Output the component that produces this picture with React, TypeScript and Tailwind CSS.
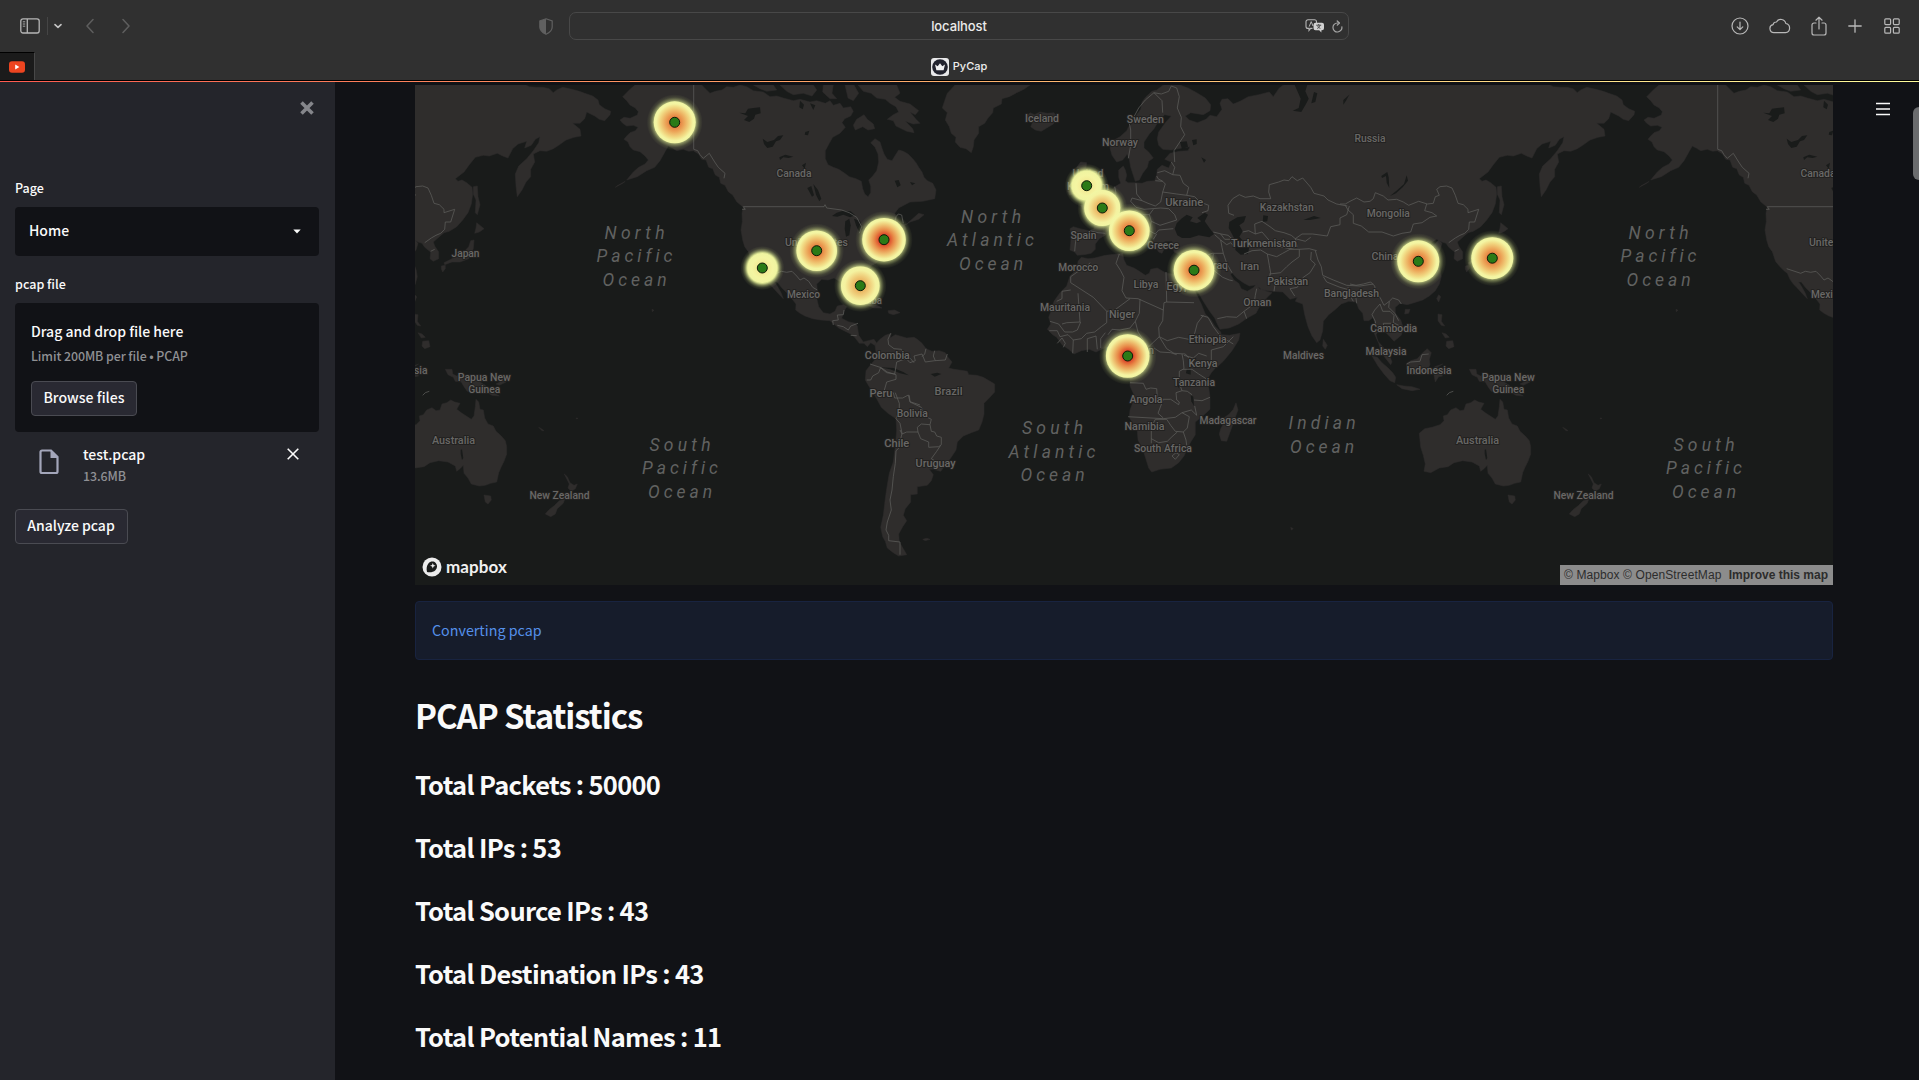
import React from "react";

/* ---------- map geometry ---------- */

// Coastlines and borders are stored per tile in thirds of a pixel; each tile has its own origin.
type Tile = "A" | "B" | "C" | "D" | "E" | "F";
const ORIGIN: Record<Tile, [number, number]> = {
  A: [400, 80],
  B: [860, 80],
  C: [1340, 80],
  D: [400, 330],
  E: [900, 330],
  F: [1380, 330],
};
type Part = [Tile, string];

function points(parts: Part[]) {
  return parts
    .flatMap(([tile, pts]) =>
      pts
        .trim()
        .split(/\s+/)
        .map((p) => {
          const [x, y] = p.split(",").map(Number);
          return `${(ORIGIN[tile][0] + x / 3).toFixed(1)},${(ORIGIN[tile][1] + y / 3).toFixed(1)}`;
        }),
    )
    .join(" ");
}

const LAND: Part[][] = [
  // North and Central America
  [
    ["A", "705,15 690,28 668,50 680,62 690,75 706,84 715,95 712,105 690,115 672,112 660,120 668,130 680,138 700,136 714,142 706,152 690,158 680,168 672,178 684,186 690,200 700,210 720,215 735,228 745,240 735,252 716,262 700,276 680,300 712,290 740,272 764,262 780,242 795,215 805,198 818,205 830,212 850,208 866,214 880,212 896,222 905,238 918,240 926,262 938,266 946,285 958,292 962,310 975,316 985,335 998,345 1010,365 1030,382 1026,400 1027,425 1023,450 1028,480 1034,500 1045,515 1050,530 1055,545 1068,560 1080,572 1090,580 1098,598 1108,612 1122,626 1134,640 1150,656 1144,640 1134,622 1124,606 1132,606 1144,622 1158,636 1172,652 1188,672 1187,690 1200,700 1215,708 1238,716 1262,720 1290,722 1302,732 1316,744 1332,752 1352,762 1364,772 1378,790 1392,790 1402,800 1412,788 1424,796 1430,790 1422,778 1404,782 1390,786 1376,766 1372,738 1366,730 1345,725 1325,715 1332,694 1340,680 1330,674 1312,678 1305,694 1290,702 1270,698 1256,680 1250,655 1252,630 1250,612 1265,598 1284,600 1302,594 1318,604 1340,600 1362,600 1375,608 1385,625 1395,642 1403,636 1400,614 1396,596 1402,572 1416,556 1430,548 1446,530 1452,505 1462,488 1475,482 1486,466 1506,456 1518,448 1514,436 1530,426 1556,418 1572,404 1556,400 1520,432 1504,434 1492,420 1484,400 1496,384 1530,366 1568,364 1604,356 1608,330 1598,310 1582,302 1572,292 1566,276 1556,262 1548,248 1538,236 1524,222 1510,214 1496,210 1486,226 1476,242 1462,238 1452,222 1446,205 1440,186 1425,176 1412,188 1425,202 1434,222 1436,246 1430,272 1418,288 1406,300 1412,318 1412,338 1404,350 1394,342 1388,326 1384,304 1368,296 1348,290 1334,280 1316,268 1300,262 1284,254 1276,236 1276,212 1288,190 1298,172 1320,160 1336,142 1326,128 1334,116 1352,108 1360,94 1352,80 1330,84 1320,70 1300,76 1290,62 1276,70 1250,62 1230,66 1200,58 1180,62 1150,54 1130,48 1110,50 1090,36 1060,32 1040,20 1020,15 1000,22 980,20 966,30 946,34 930,40 916,26 905,15"],
  ],
  // Arctic archipelago and Baffin Island
  [["A", "1060,15 1120,15 1130,30 1100,34 1080,26"]],
  [["A", "1140,15 1240,15 1250,30 1236,48 1210,40 1180,44 1160,34"]],
  [["A", "1270,15 1300,15 1296,40 1310,56 1290,56 1268,36"]],
  [["A", "1335,15 1362,15 1376,40 1360,62 1344,54"]],
  [["A", "1374,15 1490,15 1500,40 1484,52 1500,64 1530,72 1556,92 1546,104 1530,96 1548,118 1560,130 1540,132 1516,124 1538,146 1542,158 1520,154 1488,138 1480,122 1462,118 1480,104 1496,96 1488,80 1470,70 1456,58 1430,54 1414,40 1390,34"]],
  [["A", "1370,118 1392,104 1402,118 1420,132 1424,146 1404,150 1388,140 1366,150 1360,136"]],
  // Greenland
  [["B", "285,15 262,40 254,62 247,84 262,98 256,120 268,140 274,160 288,172 286,186 300,202 318,206 334,218 340,200 342,180 356,160 356,140 374,130 384,114 398,98 400,84 424,72 426,56 448,50 470,38 492,28 510,15"]],
  // Iceland
  [["B", "500,108 510,98 524,104 540,96 562,100 582,98 592,112 580,132 560,144 544,154 526,150 512,140 518,126 502,122"]],
  // Great Britain and Ireland
  [["B", "662,246 680,248 678,264 692,278 696,296 708,310 714,324 732,330 726,346 704,352 684,352 670,358 680,342 664,334 672,316 660,300 654,280 650,262"]],
  [["B", "632,308 650,300 656,318 650,338 628,346 622,332"]],
  // Europe and Asia
  [
    ["B", "1270,15 1258,24 1240,50 1228,36 1196,44 1165,50 1140,64 1120,72 1104,56 1086,58 1080,70 1086,88 1070,110 1050,106 1038,118 1012,128 988,120 976,108 992,98 1030,104 1050,92 1052,74 1036,54 1010,38 984,24 960,15 910,15 890,30 876,34 858,50 846,66 842,88 830,104 824,122 806,140 800,152 780,170 756,184 750,204 756,226 770,246 788,240 802,222 808,238 812,262 820,286 826,304 838,300 848,280 862,262 866,244 880,234 866,216 852,204 852,186 868,162 882,146 896,122 914,104 934,108 916,128 896,156 892,176 896,196 908,208 934,210 966,204 990,200 984,212 958,214 930,220 914,238 934,246 926,264 906,256 892,268 890,284 884,302 862,304 846,310 824,308 804,308 796,302 800,286 796,270 790,258 776,270 776,292 782,310 762,322 748,338 734,352 716,362 704,370 684,366 686,374 662,376 668,388 688,394 700,404 704,424 702,446 686,452 660,446 640,440 630,446 634,466 632,490 630,510 644,516 652,526 672,524 694,520 706,508 706,492 718,476 738,464 742,452 760,446 782,446 796,452 808,470 822,480 832,500 830,512 842,510 846,498 856,494 868,494 848,474 832,456 824,436 832,430 842,444 862,462 878,478 884,496 896,516 906,520 912,508 902,492 916,484 936,484 940,500 942,516 962,526 988,528 1010,522 1030,528 1028,560 1022,590 1008,598 1002,612 1014,636 1030,664 1048,692 1064,714 1072,732 1080,748 1108,744 1136,732 1162,714 1188,700 1196,684 1206,670 1222,652 1236,638 1216,632 1198,626 1190,608 1182,622 1162,634 1144,626 1136,610 1122,600 1112,584 1116,578 1130,594 1150,608 1168,618 1190,614 1206,630 1240,634 1268,636 1290,658 1312,652 1306,664 1328,672 1334,704 1344,740 1356,768 1370,788 1380,780 1388,752 1390,724 1406,704 1424,690 1444,672 1466,664 1488,666"],
    ["C", "50,670 56,686 68,700 72,722 86,722 100,712 106,736 102,758 116,790 122,812 136,834 152,854 156,846 146,820 130,802 114,784 108,764 116,752 132,752 150,770 162,784 184,766 190,744 182,720 166,700 166,682 180,670 202,674 222,668 248,660 268,648 286,632 298,612 304,590 300,568 292,548 284,530 300,510 306,490 296,480 282,496 270,490 290,478 306,486 318,490 326,502 344,516 342,536 352,544 368,536 368,516 356,498 352,486 370,470 384,458 400,454 422,440 440,420 456,398 466,372 470,342 468,322 452,308 438,300 426,304 418,296 444,276 460,254 478,232 502,226 520,228 544,220 560,228 576,234 590,206 606,192 632,184 626,204 646,196 658,178 672,170 668,188 652,212 632,236 608,258 598,282 600,318 604,350 618,330 630,306 644,290 644,268 656,246 652,222 672,212 692,214 712,206 728,196 750,180 774,172 795,168 792,148 770,130 792,130 806,116 812,96 836,108 850,118 866,122 882,104 884,94 866,86 850,74 846,60 830,48 806,40 790,34 768,28 740,22 722,30 712,38 700,26 680,22 660,22 640,20 630,15"],
  ],
  // Africa
  [
    ["B", "664,532 684,536 704,534 736,526 770,522 788,520 792,540 800,556 822,564 838,574 856,586 868,580 872,568 892,564 916,578 946,584 976,586 1002,594 994,612 1008,640 1024,672 1036,702 1052,718 1064,738 1082,756 1084,764 1108,766 1140,760 1136,780 1116,812 1090,844 1070,862"],
    ["E", "948,112 934,128 922,148 926,172 930,202 930,238 908,258 886,276 886,314 872,336 864,352 852,378 836,398 814,414 780,418 755,426 746,414 738,388 728,356 714,330 712,302 698,280 688,262 690,240 700,214 700,190 690,168 690,148 680,124 676,90 676,72 656,62 636,48 608,56 588,66 568,58 544,62 522,72 506,58 486,44 470,22"],
    ["B", "578,764 562,748 572,732 566,712 574,692 582,664 600,638 620,618 630,588 652,566 654,544"],
  ],
  // Madagascar
  [["E", "1008,218 1014,240 1006,262 996,290 980,334 964,332 958,312 962,296 970,282 968,266 988,252 1000,238"]],
  // South America
  [
    ["D", "1425,44 1440,28 1456,16 1474,10 1470,24 1486,14 1520,24 1542,22"],
    ["E", "52,28 66,40 78,56 96,64 118,62 136,68 144,82 156,96 146,114 162,118 178,120 202,124 206,134 230,136 250,142 270,154 284,162 284,186 264,208 252,220 252,252 246,276 236,300 214,308 190,318 172,336 168,360 152,384 138,402 122,424 100,418 88,418 100,434 94,452 82,466 52,470 52,492 32,494 32,516 16,536 10,556 20,572 8,590 -4,612 -2,636 10,656 20,674 -4,678"],
    ["D", "1480,668 1462,654 1456,634 1448,620 1442,592 1450,556 1454,520 1460,476 1468,430 1480,396 1486,350 1490,300 1488,266 1464,250 1444,232 1430,206 1418,186 1404,164 1396,150 1398,122 1412,104 1424,90 1428,66"],
  ],
  // Australia, Tasmania, New Zealand
  [["F", "118,310 134,296 156,292 180,284 192,272 190,258 202,254 212,240 228,233 240,242 252,240 258,222 272,218 284,210 296,216 312,220 302,238 318,250 346,268 354,258 358,230 360,208 368,216 372,238 382,240 386,264 396,282 412,288 420,304 436,318 448,332 452,350 452,372 444,394 436,410 428,428 422,456 404,460 388,466 370,468 346,462 336,444 324,430 322,406 312,416 302,424 298,408 276,396 248,392 222,398 204,410 178,414 152,428 132,424 136,402 130,376 122,352"]],
  [["F", "384,495 404,498 406,510 396,522 388,516"]],
  [["F", "625,432 634,440 642,458 654,466 664,462 658,476 646,484 636,474 640,462"]],
  [["F", "626,508 622,520 604,536 598,552 584,560 568,552 578,540 596,526 610,512"]],
  // New Guinea and Indonesian islands
  [["F", "268,118 288,118 290,132 302,138 318,130 342,144 366,152 388,166 396,180 412,188 430,198 408,196 390,186 372,178 356,186 334,184 324,170 316,156 298,154 292,142 276,134"]],
  [["F", "420,162 448,148 450,156 430,166"]],
  [["F", "-24,78 -8,82 6,98 22,112 38,128 47,142 44,158 30,152 12,132 -6,108"]],
  [["F", "50,164 72,168 96,170 120,178 96,182 66,176"]],
  [["F", "80,100 92,92 112,86 128,68 142,56 154,68 148,88 150,104 136,130 116,134 92,132 80,116"]],
  [["F", "164,110 188,102 172,112 176,126 188,138 176,140 166,156 162,136"]],
  // Philippines, Taiwan, Hainan, Sri Lanka
  [["C", "294,702 306,704 304,724 314,738 304,736 294,722"]],
  [["C", "320,784 338,782 342,800 326,806 318,798"]],
  [["C", "306,758 318,762 328,772 316,774"]],
  [["C", "296,644 302,650 296,666 290,656"]],
  [["C", "196,688 210,688 206,700 194,702"]],
  [["B", "1390,778 1402,796 1396,808 1388,798"]],
  // Sakhalin and Japan
  [["C", "472,320 484,318 486,350 492,374 484,404 478,398 480,360 472,342"]],
  [["C", "482,428 504,446 490,456 476,460 480,444"]],
  [["C", "464,482 474,480 472,506 458,536 432,546 408,546 386,554 384,548 412,534 438,522 458,500"]],
  [["C", "376,558 388,556 388,566 380,576 376,566"]],
  // Caribbean
  [["A", "1360,660 1390,660 1420,670 1446,684 1420,684 1392,670"]],
  [["A", "1464,692 1484,690 1500,698 1480,704 1466,700"]],
  // Islands and atolls
  [["A", "756,688 762,691 757,695"]],
  [["D", "416,292 424,296 432,302 426,302"]],
  [["D", "528,264 534,265 530,267"]],
  [["E", "68,628 80,625 90,628 76,632"]],
  [["E", "1172,592 1180,596 1174,600"]],
  [["A", "646,322 654,316 676,304 668,310"]],
];

const WATER: Part[][] = [
  // Black Sea, Azov, Caspian, Aral
  [["B", "952,466 944,446 950,430 964,416 980,404 998,412 990,424 1010,430 1024,424 1012,414 1034,398 1044,404 1034,424 1050,446 1062,462 1048,472 1016,466 990,474 966,474"]],
  [["B", "1108,426 1132,412 1158,408 1152,426 1138,436 1148,454 1138,470 1152,486 1168,500 1164,522 1142,524 1126,510 1128,486 1116,462 1106,444"]],
  [["B", "1210,406 1224,408 1222,424 1208,426"]],
  [["B", "1330,420 1362,408 1382,414 1350,420"]],
  // Russian lakes and gulfs
  [["B", "960,186 980,184 984,200 966,208"]],
  [["B", "996,180 1010,178 1010,192 1000,196"]],
  [["B", "1024,232 1038,240 1032,248"]],
  [["B", "1304,15 1342,15 1336,34 1346,56 1338,72 1324,96 1298,92 1316,84 1322,56"]],
  [["B", "1362,36 1372,40 1366,66 1354,70"]],
  [["B", "1450,60 1468,44 1458,62 1450,74"]],
  [["C", "200,286 204,302 188,322 168,340 150,348 172,330 192,312"]],
  [["C", "124,288 142,276 146,292 148,324 140,308 138,288 126,294"]],
  // Canadian lakes and Arctic channels
  [["A", "1018,98 1036,100 1044,86 1060,84 1080,82 1082,100 1066,104 1062,116 1048,126 1032,120 1044,108"]],
  [["A", "1088,176 1102,186 1122,180 1134,168 1150,166 1140,180 1128,184 1118,200 1102,204 1092,192"]],
  [["A", "1138,232 1156,224 1180,230 1166,234 1150,232 1140,240"]],
  [["A", "1216,156 1228,152 1224,166 1214,164"]],
  [["A", "1222,324 1234,318 1242,346 1236,350"]],
  [["A", "1240,312 1254,330 1264,356 1258,364 1248,344"]],
  [["A", "1206,256 1218,248 1214,266"]],
  [["A", "1200,62 1212,74 1208,88 1198,82"]],
  [["A", "1230,70 1246,76 1240,90"]],
  [["A", "1484,302 1496,300 1502,316 1492,322"]],
  [["A", "1530,306 1546,310 1536,316"]],
  // Great Lakes
  [["A", "1296,408 1310,398 1330,392 1352,394 1366,406 1350,412 1330,404 1312,410"]],
  [["A", "1336,424 1348,416 1352,436 1348,466 1338,470 1334,446"]],
  [["A", "1362,416 1380,422 1388,446 1378,456 1368,436"]],
  [["A", "1382,474 1404,462 1420,456 1400,470"]],
  // African, Amazonian and Australian waters
  [["E", "860,116 872,116 872,134 858,130"]],
  [["E", "828,146 834,150 838,176 830,164"]],
  [["E", "872,196 880,200 882,228 874,214"]],
  [["E", "-60,112 -20,114 10,126 26,136 0,130 -30,118"]],
  [["E", "92,132 112,128 124,132 104,140"]],
  [["F", "314,360 318,358 322,384 318,390 314,372"]],
];

const BORDERS: Part[][] = [
  [["A", "881,15 881,208 893,212 900,224 910,235 928,220 944,246 955,262 975,280 972,295"]],
  [["A", "1026,388 1036,388 1030,380 1272,380 1275,374 1280,384 1325,390 1348,398 1370,412 1385,440 1378,460"]],
  [["A", "1484,430 1488,410 1495,402 1505,405 1510,430"]],
  [["A", "1088,566 1130,580 1144,574 1160,577 1176,574 1190,588 1200,600 1212,594 1226,604 1238,622 1252,630"]],
  [["A", "1300,735 1298,722 1315,720 1312,705 1330,704 1332,690"]],
  [["A", "1312,736 1330,740 1345,750 1352,738 1374,730"]],
  [["A", "1352,766 1370,767"]],
  [["D", "1472,10 1464,28 1466,44 1482,56 1504,58 1510,70 1506,90 1530,84 1542,98"]],
  [["D", "1410,102 1440,112 1460,128 1484,132 1490,96 1506,90"]],
  [["D", "1400,150 1412,150 1418,138 1436,128 1442,112 1462,126 1488,134 1488,148 1460,156 1452,184 1480,188 1484,204 1508,204 1525,195 1530,215 1560,225"]],
  [["E", "28,196 30,216 64,232 74,258 94,268 90,284 64,282 52,292 54,306 20,306 6,312 0,300"]],
  [["E", "54,306 62,326 86,336 86,352 116,350 124,344 124,322 110,318 104,306 94,304 90,284"]],
  [["E", "122,346 110,364 94,386 128,406"]],
  [["E", "10,76 30,98 46,92 42,78 66,72 76,96 104,92 136,90 142,72"]],
  [["E", "78,56 74,72 66,80"]],
  [["E", "104,62 100,78 106,92"]],
  [["D", "1486,188 1498,220 1498,240 1488,266 1500,280 1506,310 1496,355 1488,362 1486,400 1480,440 1476,480 1470,510 1474,540 1462,576 1458,600 1466,616 1466,632 1500,636 1500,674"]],
  [["B", "778,522 768,550 782,572 792,592 786,632 798,654 834,656"]],
  [["B", "632,590 632,608 700,652 740,694 764,690 810,656"]],
  [["B", "654,640 660,726 620,728 606,732"]],
  [["B", "590,664 606,656 606,634 632,630"]],
  [["B", "632,590 652,576 674,568 690,548"]],
  [["B", "918,576 920,666 1002,668"]],
  [["B", "834,656 910,690 912,668 920,666"]],
  [["B", "910,690 908,722 896,742 898,770 922,782 956,772 986,778 1004,760 1012,730 1030,706"]],
  [["B", "840,658 838,700 826,724 810,744 780,750 756,748 744,764"]],
  [["B", "570,724 596,732 614,756 638,756 652,750 662,726"]],
  [["B", "568,752 592,752 600,770 624,764 640,780 638,820"]],
  [["B", "592,790 606,774 616,790 610,802"]],
  [["B", "640,780 664,776 680,760 704,756 724,740 740,728 740,694"]],
  [["B", "682,816 682,776 708,768 712,808"]],
  [["B", "722,804 722,776 736,758"]],
  [["B", "826,724 834,756 850,780 866,800 898,770"]],
  [["B", "898,770 920,806 942,820 976,822 1000,850"]],
  [["B", "1022,706 1044,712 1060,740 1076,762 1100,780 1120,792"]],
  [["E", "744,66 758,70 762,54 780,66 812,68 830,74"]],
  [["E", "846,72 850,92 852,116 838,124 838,160 846,182"]],
  [["E", "690,158 730,160 738,178 752,174 770,176 772,206 790,208 774,250 790,264"]],
  [["E", "790,208 812,208 836,224 838,216 830,210 828,188 846,182 862,184 876,194"]],
  [["E", "684,260 790,266 826,262 846,248 874,240 890,256 884,228"]],
  [["E", "754,340 754,292 766,268 800,268 812,286 826,304 850,306 862,294 868,260 846,248"]],
  [["E", "754,326 776,338 802,334 816,320 832,306"]],
  [["E", "850,306 858,330 860,346"]],
  [["E", "882,210 906,212 930,202"]],
  [["E", "850,118 876,118 896,132 918,146"]],
  [["E", "852,76 880,84 896,70 920,78"]],
  [["E", "934,90 934,60 970,50 1000,20"]],
  [["E", "816,378 828,368 838,374 826,388 816,378"]],
  [["B", "805,235 812,196 812,150 808,130 822,110 836,84 856,60 882,38 906,62 908,98"]],
  [["B", "882,38 904,42 926,34 934,18 950,24 958,50 952,84 964,112 962,140 974,164 942,212 944,246"]],
  [["B", "892,278 914,272 938,284 944,262 934,246"]],
  [["B", "938,284 960,286 970,310 986,322 980,346 1004,350 1020,366 1046,376 1044,392 1026,398"]],
  [["B", "886,302 908,304 916,312 908,336 950,342 980,346"]],
  [["B", "908,304 894,296 890,288"]],
  [["B", "908,336 902,366 886,378 864,370 846,362 816,354 812,364 828,382 852,388 876,386 902,384 926,386 944,404 950,420"]],
  [["B", "828,310 830,342 846,362"]],
  [["B", "790,392 812,396 830,392 846,404 868,404 880,388"]],
  [["B", "868,404 874,424 900,436 950,420"]],
  [["B", "852,430 846,412 830,408"]],
  [["B", "874,424 868,452 886,462 896,450 940,446"]],
  [["B", "880,478 890,462"]],
  [["B", "690,452 714,458 736,460"]],
  [["B", "638,464 650,466 646,492 644,514"]],
  [["B", "764,320 768,340 758,352 774,362 772,384"]],
  [["B", "1060,456 1084,462 1104,466 1118,478 1094,478 1082,462"]],
  [["B", "1064,464 1082,480 1100,494 1112,488 1124,502"]],
  [["B", "1082,480 1086,502 1090,520 1056,520 1030,530"]],
  [["B", "1090,520 1100,550 1116,578"]],
  [["B", "1060,522 1056,552 1032,566 1034,588 1060,570 1088,592 1108,600 1118,602"]],
  [["B", "1072,716 1100,710 1130,712 1152,694 1160,716"]],
  [["B", "1152,694 1182,672 1186,646 1190,626"]],
  [["B", "1122,406 1106,400 1104,376 1118,356 1138,344 1156,352 1180,348 1200,356 1232,356 1226,336 1228,314 1256,306 1272,300 1286,302 1296,290 1312,302 1328,294 1352,322 1362,340 1392,348 1404,360 1430,372 1462,378"]],
  [["B", "1186,462 1184,432 1206,424 1230,440 1246,452 1272,458 1294,466 1306,476 1326,462 1358,462 1402,468 1412,440 1440,434 1440,414 1460,404 1468,378"]],
  [["B", "1148,456 1166,452 1186,462 1206,456 1230,484 1260,500 1290,506 1312,500 1306,476"]],
  [["B", "1306,476 1336,484 1352,472"]],
  [["B", "1152,522 1176,512 1202,510 1222,522 1228,556 1232,580 1226,596 1246,608 1242,634"]],
  [["B", "1222,522 1250,530 1268,520 1290,508 1318,508 1348,506 1370,512"]],
  [["B", "1228,582 1262,578 1280,560 1296,546 1318,530 1318,508"]],
  [["B", "1354,516 1352,540 1366,552 1350,578 1330,592 1312,622 1290,626 1304,648"]],
  [["B", "1366,512 1374,540 1384,560 1388,586 1420,600 1460,616 1500,618 1540,612"]],
  [["B", "1390,590 1400,606 1440,622 1462,628"]],
  [["B", "1464,622 1472,650 1480,664"]],
  [["C", "0,372 16,372 30,364 50,354 72,366 90,364 100,356 106,338 130,348 144,360 170,358 190,366 206,376 236,364 262,372 280,370 286,350 298,346 290,328 300,320 320,318 336,324 346,346 354,370 370,374 384,388 384,398 416,388 404,426 388,426 386,448 374,460 360,466 346,474 326,488"]],
  [["C", "16,376 24,390 40,404 40,430 64,438 86,456 126,456 160,468 186,460 212,456 220,432 246,428 270,412 290,408 276,398 254,392 260,372"]],
  [["C", "30,612 48,616 70,612 92,606 104,618 108,642 120,652 132,676 148,664 158,654 176,660 184,672"]],
  [["C", "50,670 46,640 30,634"]],
  [["C", "120,672 104,690 96,704 106,724 108,740"]],
  [["C", "120,672 128,694 150,694 162,706 160,728 176,736 182,744"]],
  [["C", "148,664 146,682 164,700 176,722"]],
  [["C", "134,752 130,730 154,730"]],
  [["C", "200,852 212,846 240,844 246,824 266,822"]],
  [["C", "344,514 356,508"]],
  [["D", "68,196 76,188 88,184"]],
];

// Name, centre x, baseline y, length.
type Label = [string, number, number, number];
const COUNTRIES: Label[] = [
  ["Japan", 465.5, 257, 28],
  ["Canada", 794, 177, 35],
  ["United States", 816.5, 246, 63],
  ["Mexico", 803.5, 298, 33],
  ["Cuba", 871, 304.5, 22],
  ["Colombia", 887.3, 359.5, 45],
  ["Peru", 881, 397, 23],
  ["Bolivia", 912.3, 417, 31],
  ["Chile", 896.8, 447.5, 25],
  ["Brazil", 948.5, 395.5, 28],
  ["Uruguay", 935.6, 467, 40],
  ["Iceland", 1042, 122.5, 34],
  ["Sweden", 1145.3, 123, 37],
  ["Norway", 1120, 146.5, 36],
  ["United", 1088, 177.5, 31],
  ["Kingdom", 1088, 190.5, 42],
  ["Ukraine", 1184.3, 206.5, 38],
  ["Spain", 1083.5, 239, 26],
  ["Greece", 1163, 249, 32],
  ["Turkmenistan", 1264, 247, 66],
  ["Kazakhstan", 1286.7, 211.5, 54],
  ["Russia", 1370, 142, 31],
  ["Mongolia", 1388.3, 217, 43],
  ["China", 1385, 260, 27],
  ["Morocco", 1078.3, 271, 40],
  ["Libya", 1146, 288.5, 25],
  ["Egypt", 1180, 290, 27],
  ["Iraq", 1219, 269, 18],
  ["Iran", 1249.7, 270, 19],
  ["Pakistan", 1287.7, 285, 41],
  ["Bangladesh", 1351.5, 297, 55],
  ["Oman", 1257.3, 306, 28],
  ["Mauritania", 1065, 311, 50],
  ["Niger", 1122, 318, 26],
  ["Cameroon", 1130, 354, 48],
  ["Ethiopia", 1207.7, 343.5, 38],
  ["Kenya", 1203, 367, 29],
  ["Maldives", 1303.5, 359, 41],
  ["Cambodia", 1393.7, 332.5, 47],
  ["Malaysia", 1386, 355.5, 41],
  ["Indonesia", 1429, 374.5, 45],
  ["Tanzania", 1194, 386, 42],
  ["Angola", 1146, 403, 33],
  ["Namibia", 1144.5, 430, 40],
  ["South Africa", 1163, 452.5, 58],
  ["Madagascar", 1228, 424.5, 57],
  ["Papua New", 1508.3, 381, 53],
  ["Guinea", 1508.3, 393, 32],
  ["Papua New", 484.3, 381, 53],
  ["Guinea", 484.3, 393, 32],
  ["Australia", 1477.5, 444, 43],
  ["Australia", 453.5, 444, 43],
  ["New Zealand", 1583.5, 499.5, 60],
  ["New Zealand", 559.5, 499.5, 60],
  ["Indonesia", 405, 374.5, 45],
  ["Canada", 1818, 177, 35],
  ["United States", 1840.5, 246, 63],
  ["Mexico", 1827.5, 298, 33],
];

const OCEANS: Label[] = [
  ["North", 635, 239, 60],
  ["Pacific", 635, 262.5, 76],
  ["Ocean", 635, 286, 64],
  ["North", 991.500, 223, 60],
  ["Atlantic", 991, 246.5, 87],
  ["Ocean", 991.500, 270, 64],
  ["North", 1659, 239, 60],
  ["Pacific", 1659, 262.5, 76],
  ["Ocean", 1659, 286, 64],
  ["South", 680.5, 451, 61],
  ["Pacific", 680.5, 474.5, 76],
  ["Ocean", 680.5, 498, 64],
  ["South", 1053, 434.5, 61],
  ["Atlantic", 1052.500, 458, 87],
  ["Ocean", 1053, 481.5, 64],
  ["Indian", 1322.500, 429.5, 67],
  ["Ocean", 1322.500, 453, 64],
  ["South", 1704.5, 451, 61],
  ["Pacific", 1704.5, 474.5, 76],
  ["Ocean", 1704.5, 498, 64],
];

// x, y, disc radius, intensity
const HOTSPOTS: [number, number, number, "hot" | "warm" | "mild" | "weak"][] = [
  [762.3, 268, 15, "weak"],
  [1086.7, 185.7, 15, "weak"],
  [1102.3, 208, 18, "mild"],
  [860.3, 285.7, 19.3, "mild"],
  [674.7, 122.3, 21, "warm"],
  [816.7, 250.7, 20.3, "warm"],
  [1129.3, 230.7, 20.3, "warm"],
  [1194, 270.2, 20.3, "warm"],
  [1418.3, 261.3, 21, "warm"],
  [1492.3, 258.2, 21, "warm"],
  [884, 239.7, 21.8, "hot"],
  [1127.7, 356, 21.8, "hot"],
];

function WorldMap() {
  return (
    <svg className="block h-[500px] w-[1418px]" viewBox="415 85 1418 500">
      <defs>
        <radialGradient id="hot">
          <stop offset="0.2" stopColor="#d93a24" />
          <stop offset="0.45" stopColor="#e88a48" />
          <stop offset="0.72" stopColor="#efcf7c" />
          <stop offset="0.88" stopColor="#f4f4a2" />
          <stop offset="1" stopColor="#f2f6a4" />
        </radialGradient>
        <radialGradient id="warm">
          <stop offset="0.2" stopColor="#e4793c" />
          <stop offset="0.45" stopColor="#eca659" />
          <stop offset="0.72" stopColor="#f1d983" />
          <stop offset="0.88" stopColor="#f4f5a3" />
          <stop offset="1" stopColor="#f2f6a4" />
        </radialGradient>
        <radialGradient id="mild">
          <stop offset="0.2" stopColor="#e9ac58" />
          <stop offset="0.5" stopColor="#efcd7a" />
          <stop offset="0.8" stopColor="#f4f2a0" />
          <stop offset="1" stopColor="#f2f6a4" />
        </radialGradient>
        <radialGradient id="weak">
          <stop offset="0.2" stopColor="#f2e690" />
          <stop offset="0.7" stopColor="#f4f5a2" />
          <stop offset="1" stopColor="#eff4a0" />
        </radialGradient>
        <radialGradient id="glow">
          <stop offset="0.7" stopColor="#e6ef98" stopOpacity="0.9" />
          <stop offset="0.8" stopColor="#c9d684" stopOpacity="0.48" />
          <stop offset="0.9" stopColor="#a8b56c" stopOpacity="0.16" />
          <stop offset="1" stopColor="#a8b56c" stopOpacity="0" />
        </radialGradient>
        <g id="world">
          <g fill="#2f2d2c" stroke="#2f2d2c" strokeWidth="0.5">
            {LAND.map((p, i) => (
              <polygon key={i} points={points(p)} />
            ))}
          </g>
          <g fill="#191b1a">
            {WATER.map((p, i) => (
              <polygon key={i} points={points(p)} />
            ))}
          </g>
          <g fill="none" stroke="#5e5d5b" strokeWidth="0.75" strokeLinejoin="round">
            {BORDERS.map((p, i) => (
              <polyline key={i} points={points(p)} />
            ))}
          </g>
        </g>
      </defs>
      <rect x="415" y="85" width="1418" height="500" fill="#191b1a" />
      <use href="#world" />
      <use href="#world" x="-1024" />
      <use href="#world" x="1024" />
      <g
        className="font-['Roboto',sans-serif]"
        fontSize="11"
        fontWeight="500"
        fill="#696866"
        stroke="#222120"
        strokeWidth="2"
        strokeLinejoin="round"
        paintOrder="stroke"
        textAnchor="middle"
      >
        {COUNTRIES.map(([t, x, y, w], i) => (
          <text key={i} x={x} y={y - 0.5} textLength={w} lengthAdjust="spacingAndGlyphs">
            {t}
          </text>
        ))}
      </g>
      <g
        className="font-['Roboto',sans-serif] [font-variant-ligatures:none]"
        fontSize="17.5"
        fontStyle="italic"
        fontWeight="400"
        fill="#616261"
      >
        {OCEANS.map(([t, x, y, w], i) => (
          <text key={i} x={x - w / 2 - 0.5} y={y - 0.5} textLength={w}>
            {t}
          </text>
        ))}
      </g>
      {HOTSPOTS.map(([x, y, r], i) => (
        <circle key={i} cx={x} cy={y} r={r + 7} fill="url(#glow)" />
      ))}
      {HOTSPOTS.map(([x, y, r, k], i) => (
        <circle key={i} cx={x} cy={y} r={r} fill={`url(#${k})`} />
      ))}
      {HOTSPOTS.map(([x, y], i) => (
        <circle key={i} cx={x} cy={y} r="5" fill="#2b7a17" stroke="#0d1a08" strokeWidth="1" />
      ))}
    </svg>
  );
}

/* ---------- browser chrome ---------- */

function Toolbar() {
  return (
    <div className="flex h-[52px] items-center">
      <div className="flex w-[569px] items-center pl-5">
        <svg className="h-4 w-5" viewBox="0 0 20 16" fill="none" stroke="#b5b5b5" strokeWidth="1.3">
          <rect x="0.8" y="0.8" width="18.4" height="14.2" rx="2.2" />
          <path d="M7.3 1v14" />
          <path d="M2.8 3.8h2.4M2.8 6h2.4M2.8 8.2h2.4" strokeWidth="0.9" />
        </svg>
        <div className="ml-[7px] h-[18px] w-px bg-[#454545]" />
        <svg className="ml-[6px] h-2 w-2" viewBox="0 0 8 8" fill="none" stroke="#c4c4c4" strokeWidth="1.6" strokeLinecap="round" strokeLinejoin="round">
          <path d="M1 2.6 4 5.4 7 2.6" />
        </svg>
        <svg className="ml-6 h-4 w-2" viewBox="0 0 8 16" fill="none" stroke="#5e5e5e" strokeWidth="1.5" strokeLinecap="round" strokeLinejoin="round">
          <path d="M7 1.5 1 8l6 6.5" />
        </svg>
        <svg className="ml-7 h-4 w-2" viewBox="0 0 8 16" fill="none" stroke="#5e5e5e" strokeWidth="1.5" strokeLinecap="round" strokeLinejoin="round">
          <path d="M1 1.5 7 8l-6 6.5" />
        </svg>
        <svg className="mr-[16px] ml-auto h-[17px] w-[14px]" viewBox="0 0 14 17">
          <path d="M7 .8 13.2 3v6c0 3.300-2.700 5.700-6.200 7.300C3.500 14.700.8 12.300.8 9V3z" fill="none" stroke="#606060" strokeWidth="1.2" />
          <path d="M7 .8.8 3v6c0 3.300 2.700 5.700 6.200 7.300z" fill="#606060" />
        </svg>
      </div>
      <div className="flex h-7 w-[780px] items-center rounded-[7px] border border-[#484848] pr-[5px]">
        <div className="w-[13px]" />
        <div className="flex-1 text-center text-[13px] leading-4 font-medium tracking-[-0.1px] text-[#ebebeb]">localhost</div>
        <svg className="-ml-[30px] h-[14px] w-5" viewBox="0 0 20 14">
          <path d="M3 .8h6.500a2 2 0 0 1 2 2V5M7.500 9.400H5.600L4 11.400V9.400H3a2 2 0 0 1-2-2V2.800a2 2 0 0 1 2-2" fill="none" stroke="#b5b5b5" strokeWidth="1.1" />
          <path d="M4.200 7.600 6.200 2.600 8 7" fill="none" stroke="#b5b5b5" strokeWidth="1" />
          <path d="M10.500 3.800H17a2 2 0 0 1 2 2v3.400a2 2 0 0 1-2 2h-.6v2.200l-2.200-2.200h-3.700a2 2 0 0 1-2-2V5.800a2 2 0 0 1 2-2z" fill="#d2d2d2" />
          <path d="M11.200 6.200h5M13.700 5v1.200M12.200 9.500c1.500-.7 2.500-1.800 2.800-3.200M12.500 6.800c.5 1.200 1.500 2.200 2.900 2.700" fill="none" stroke="#333" strokeWidth=".8" />
        </svg>
        <svg className="ml-[7px] h-[13px] w-[11px]" viewBox="0 0 11 13" fill="none" stroke="#a6a6a6" strokeWidth="1.2" strokeLinecap="round" strokeLinejoin="round">
          <path d="M9.900 6.800A4.500 4.500 0 1 1 5.400 3h1.800" />
          <path d="M5.200 1 7.400 3 5.300 5.200" />
        </svg>
      </div>
      <div className="ml-auto flex items-center pr-[19px] text-[#b8b8b8]">
        <svg className="h-[18px] w-[18px]" viewBox="0 0 18 18" fill="none" stroke="currentColor" strokeWidth="1.2" strokeLinecap="round" strokeLinejoin="round">
          <circle cx="9" cy="9" r="8" />
          <path d="M9 5v7.500M6.200 9.900 9 12.700l2.800-2.800" />
        </svg>
        <svg className="ml-5 h-[16px] w-[22px]" viewBox="0 0 22 16" fill="none" stroke="currentColor" strokeWidth="1.2" strokeLinejoin="round">
          <path d="M5.200 14.600a4 4 0 0 1-1.100-7.900A3.300 3.300 0 0 1 7.500 4a5 5 0 0 1 9.300 1.500 4.600 4.600 0 0 1-.3 9.100z" />
        </svg>
        <svg className="ml-[20px] h-5 w-[16px]" viewBox="0 0 16 20" fill="none" stroke="currentColor" strokeWidth="1.2" strokeLinecap="round" strokeLinejoin="round">
          <path d="M5 7H3a2 2 0 0 0-2 2v8a2 2 0 0 0 2 2h10a2 2 0 0 0 2-2V9a2 2 0 0 0-2-2h-2M8 13V1.200M4.900 4.200 8 1.200l3.100 3" />
        </svg>
        <svg className="ml-[21px] h-[14px] w-[14px]" viewBox="0 0 14 14" stroke="currentColor" strokeWidth="1.3" strokeLinecap="round">
          <path d="M7 .8v12.400M.8 7h12.400" />
        </svg>
        <svg className="ml-[22px] h-4 w-4" viewBox="0 0 16 16" fill="none" stroke="currentColor" strokeWidth="1.2">
          <rect x=".8" y=".8" width="5.8" height="5.8" rx="1" />
          <rect x="9.4" y=".8" width="5.8" height="5.8" rx="1" />
          <rect x=".8" y="9.4" width="5.8" height="5.8" rx="1" />
          <rect x="9.4" y="9.4" width="5.8" height="5.8" rx="1" />
        </svg>
      </div>
    </div>
  );
}

function TabBar() {
  return (
    <div className="flex h-[28px] items-stretch">
      <div className="flex w-[35px] items-center border-t border-r border-t-black border-r-[#484848] bg-[#1b1b1b] pl-[9px]">
        <svg className="h-3 w-4" viewBox="0 0 16 12">
          <rect width="16" height="11.5" y=".2" rx="3" fill="#ee4520" />
          <path d="M6.200 3.500v5l4.200-2.500z" fill="#fff" />
        </svg>
      </div>
      <div className="flex flex-1 items-center justify-center gap-[4px] pt-px pr-[36px]">
        <svg className="h-[18px] w-[18px]" viewBox="0 0 18 18">
          <rect width="18" height="18" rx="3" fill="#e9e9ea" />
          <circle cx="9" cy="9" r="7.8" fill="#22232e" />
          <path d="m4 6.400 2.700 1.900L9 5.300l2.300 3L14 6.400l-1.400 5.800H5.400z" fill="#f1f1f2" />
        </svg>
        <span className="text-[11px] font-medium text-[#ededed]">PyCap</span>
      </div>
    </div>
  );
}

/* ---------- page ---------- */

function Sidebar() {
  return (
    <aside className="flex h-full w-[335px] flex-col bg-[#24252b] pr-4 pl-[15px] text-[#fafafa]">
      <div className="flex h-[52px] items-center justify-end pr-[5px]">
        <svg className="h-[14px] w-[14px]" viewBox="0 0 14 14" stroke="#85868b" strokeWidth="3.6">
          <path d="M1.500 1.500l11 11M12.500 1.500l-11 11" />
        </svg>
      </div>
      <div className="mt-[44px] flex h-5 items-center text-[12.5px] font-medium">Page</div>
      <div className="mt-[9px] flex h-[49px] items-center justify-between rounded-[4px] bg-[#111216] pr-[18px] pb-[2px] pl-[14px] text-[14px] font-medium">
        Home
        <svg className="mt-[2px] h-[5px] w-2" viewBox="0 0 8 5">
          <path d="M.3.5h7.400L4 4.600z" fill="#fafafa" />
        </svg>
      </div>
      <div className="mt-[18px] flex h-5 items-center text-[12.5px] font-medium">pcap file</div>
      <div className="mt-[9px] h-[129px] rounded-[4px] bg-[#111216] px-4 pt-[15px]">
        <div className="flex h-[26px] items-center text-[14px] font-medium">Drag and drop file here</div>
        <div className="mt-px flex h-[23px] items-center text-[12.4px] font-medium tracking-[-0.08px] text-[#8f9093]">
          Limit 200MB per file • PCAP
        </div>
        <button className="mt-[13px] flex h-[35px] w-[106px] items-center justify-center rounded-[4px] border border-[#4a4b52] bg-[#292932] pb-[2px] text-[14.1px] font-medium">
          Browse files
        </button>
      </div>
      <div className="mt-[11px] flex h-[46px] pr-5 pl-[23.5px]">
        <svg className="mt-[6px] h-[26px] w-5" viewBox="0 0 20 26">
          <path d="M3 1.500h9L18.500 8v14.500a1.500 1.500 0 0 1-1.500 1.500H3a1.500 1.500 0 0 1-1.500-1.500V3A1.500 1.500 0 0 1 3 1.500z" fill="none" stroke="#a3a6ba" strokeWidth="2.2" />
          <path d="M11.500 1v8H19z" fill="#a3a6ba" />
        </svg>
        <div className="-mt-px ml-[24.500px] flex-1">
          <div className="flex h-6 items-center text-[14px] font-medium">test.pcap</div>
          <div className="mt-px flex h-[18px] items-center text-[12.4px] font-medium tracking-[-0.08px] text-[#8f9094]">13.6MB</div>
        </div>
        <svg className="mt-[5px] h-3 w-3" viewBox="0 0 12 12" stroke="#fafafa" strokeWidth="1.6">
          <path d="M.7.7l10.600 10.600M11.300.7.7 11.300" />
        </svg>
      </div>
      <button className="mt-[20px] flex h-[35px] w-[113px] items-center justify-center rounded-[4px] border border-[#4a4b52] bg-[#292932] pr-px pb-[2px] text-[14px] font-medium">
        Analyze pcap
      </button>
    </aside>
  );
}

const STATS = [
  "Total Packets : 50000",
  "Total IPs : 53",
  "Total Source IPs : 43",
  "Total Destination IPs : 43",
  "Total Potential Names : 11",
];

function MapPanel() {
  return (
    <div className="relative mt-[3px] h-[500px] w-[1418px] overflow-hidden">
      <WorldMap />
      <div className="absolute bottom-[8px] left-[7px] flex items-center gap-1">
        <svg className="h-[20px] w-[20px]" viewBox="0 0 20 20">
          <circle cx="10" cy="10" r="9.5" fill="#ececec" />
          <path d="M5 15c-.8-3.500-.3-6.600 1.400-8.600 2-2.300 5.400-2.500 7.300-.5 2 2 1.800 5.200-.3 7.300C11.400 15 8.400 15.700 5 15z" fill="#191b1a" />
          <path d="m10.800 6 .8 2 2 .8-2 .8-.8 2-.8-2-2-.8 2-.8z" fill="#ececec" />
        </svg>
        <span className="font-['Lato',sans-serif] text-[17px] leading-5 font-bold tracking-[0.1px] text-[#f0f0f0]">mapbox</span>
      </div>
      <div className="absolute right-0 bottom-0 flex h-5 w-[273px] items-center justify-between bg-[#8c8c8c] pr-[5px] pl-[4px] font-['Liberation_Sans',sans-serif] text-[12px] whitespace-nowrap text-[#2c2c2c]">
        <span className="tracking-[0.1px]">© Mapbox © OpenStreetMap</span>
        <span className="font-bold">Improve this map</span>
      </div>
    </div>
  );
}

export default function App() {
  return (
    <div className="flex h-[1080px] w-[1919px] flex-col overflow-hidden bg-[#111216]">
      <header className="h-[80px] bg-[#303030] font-['Inter',sans-serif]">
        <Toolbar />
        <TabBar />
      </header>
      <div className="h-px bg-black" />
      <div className="h-px bg-linear-to-r from-[#ff5a50] via-[#fdb06c] to-[#fffd9c]" />
      <div className="flex h-[998px] font-['Noto_Sans_CJK_JP','Noto_Sans_CJK_SC',sans-serif]">
        <Sidebar />
        <main className="flex-1 overflow-hidden pl-20">
          <MapPanel />
          <div className="mt-4 flex h-[59px] w-[1418px] items-center rounded-[4px] border border-[#182340] bg-[#161c2b] pb-[2px] pl-4 text-[14.3px] text-[#5590ea]">
            Converting pcap
          </div>
          <h1 className="mt-[30px] flex h-[50px] items-center text-[33px] leading-none font-bold tracking-[-1.05px] text-[#fafafa]">
            PCAP Statistics
          </h1>
          <div className="mt-[12px]">
            {STATS.map((s) => (
              <h2 key={s} className="flex h-[63px] items-center text-[25.5px] leading-none font-bold tracking-[-0.7px] text-[#fafafa]">
                {s}
              </h2>
            ))}
          </div>
        </main>
        <div className="flex w-[43px] items-start">
          <svg className="mt-[20px] h-[14px] w-[14px]" viewBox="0 0 14 14" stroke="#fafafa" strokeWidth="1.6">
            <path d="M0 1.500h14M0 7h14M0 12.500h14" />
          </svg>
          <div className="mt-[25px] ml-auto h-[73px] w-[6px] rounded-l-full bg-[#6b6c6e]" />
        </div>
      </div>
    </div>
  );
}
